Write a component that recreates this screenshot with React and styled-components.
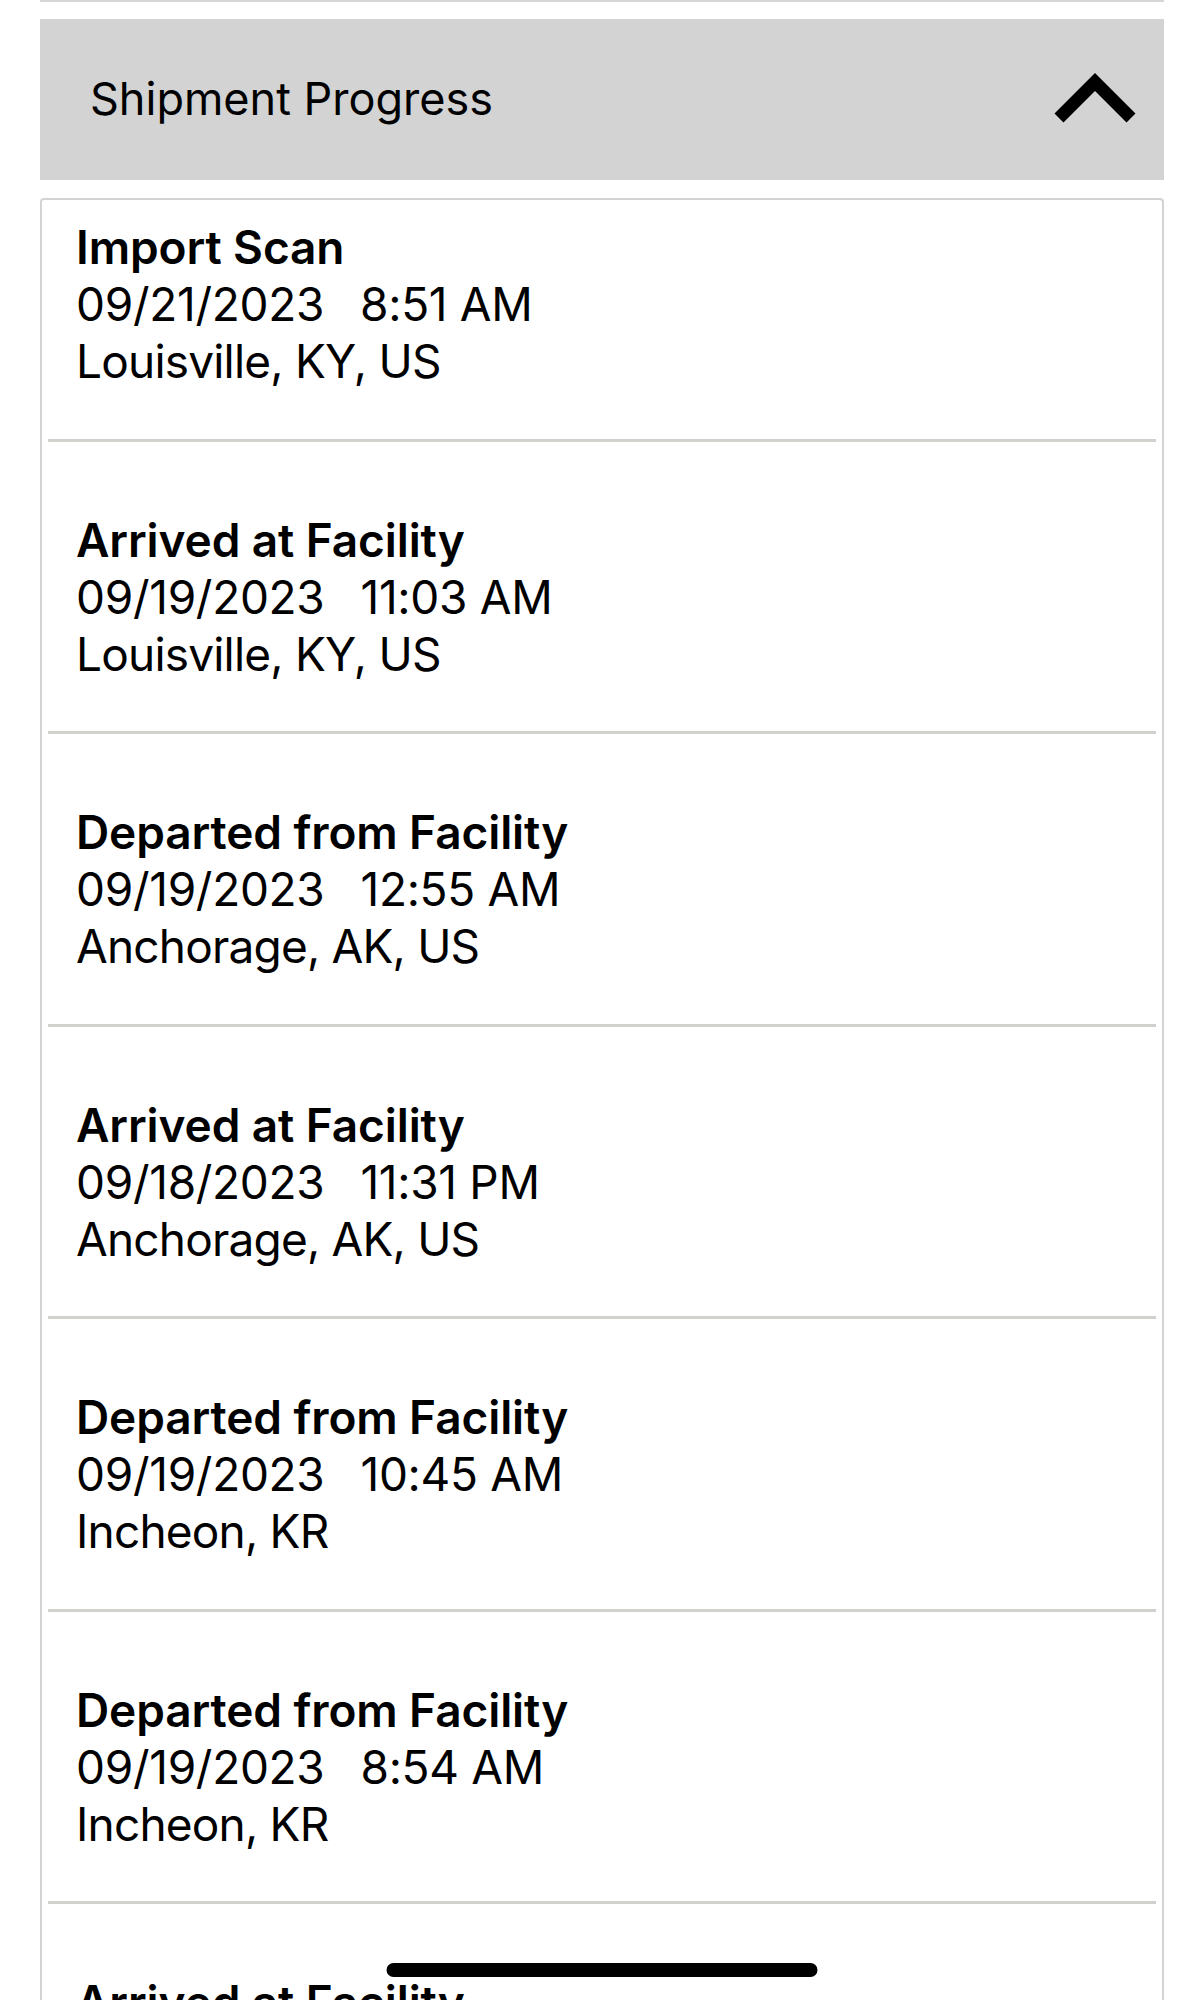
import React from "react";
import styled, { createGlobalStyle } from "styled-components";

const Global = createGlobalStyle`
  html, body { margin: 0; padding: 0; background: #ffffff; }
  body { font-family: Inter, "Noto Sans", "Liberation Sans", sans-serif; color: #000; }
`;

const Page = styled.div`
  padding: 0 40px;
  min-height: 2000px;
  box-sizing: border-box;
`;

const TopRule = styled.div`
  height: 2px;
  background: #d6d6d6;
  margin-bottom: 17px;
`;

const Header = styled.div`
  height: 161px;
  background: #d3d3d3;
  display: flex;
  align-items: center;
  justify-content: space-between;
  padding: 0 27px 2px 50px;
  box-sizing: border-box;
`;

const HeaderTitle = styled.h2`
  margin: 0;
  font-size: 45px;
  font-weight: 400;
  letter-spacing: 0;
`;

const Chevron = styled.svg`
  width: 84px;
  height: 56px;
  display: block;
  margin-top: 3px;
`;

const Card = styled.div`
  margin-top: 18px;
  border: 2px solid #d3d3d3;
  border-bottom: none;
  border-radius: 4px 4px 0 0;
  background: #fff;
`;

const Item = styled.div`
  padding: ${(p) => (p.$first ? "19px" : "70px")} 34px 48.5px;
  display: flex;
  flex-direction: column;
`;

const Divider = styled.div`
  height: 3px;
  background: #d2d1cd;
  margin: 0 6px;
`;

const spacing = { title: "-0.1px", date: "-0.3px", place: "-0.8px" };

const Line = styled.div`
  font-size: 46px;
  line-height: 57px;
  font-weight: ${(p) => (p.$kind === "title" ? 600 : 400)};
  letter-spacing: ${(p) => spacing[p.$kind]};
  white-space: nowrap;
`;

const Time = styled.span`
  margin-left: 36px;
`;

const HomeIndicator = styled.div`
  position: fixed;
  left: 50%;
  transform: translateX(-50%);
  top: 1963px;
  width: 431px;
  height: 14px;
  border-radius: 7px;
  background: #000;
`;

const events = [
  { title: "Import Scan", date: "09/21/2023", time: "8:51 AM", place: "Louisville, KY, US" },
  { title: "Arrived at Facility", date: "09/19/2023", time: "11:03 AM", place: "Louisville, KY, US" },
  { title: "Departed from Facility", date: "09/19/2023", time: "12:55 AM", place: "Anchorage, AK, US" },
  { title: "Arrived at Facility", date: "09/18/2023", time: "11:31 PM", place: "Anchorage, AK, US" },
  { title: "Departed from Facility", date: "09/19/2023", time: "10:45 AM", place: "Incheon, KR" },
  { title: "Departed from Facility", date: "09/19/2023", time: "8:54 AM", place: "Incheon, KR" },
  { title: "Arrived at Facility", date: "09/18/2023", time: "11:12 PM", place: "Incheon, KR" },
];

export default function App() {
  return (
    <>
      <Global />
      <Page>
        <TopRule />
        <Header>
          <HeaderTitle>Shipment Progress</HeaderTitle>
          <Chevron viewBox="0 0 84 56" aria-hidden="true">
            <polyline
              points="6,46 42,10 78,46"
              fill="none"
              stroke="#000"
              strokeWidth="12.7"
              strokeLinecap="butt"
              strokeLinejoin="miter"
            />
          </Chevron>
        </Header>
        <Card>
          {events.map((e, i) => (
            <React.Fragment key={i}>
              {i > 0 && <Divider />}
              <Item $first={i === 0}>
                <Line $kind="title">{e.title}</Line>
                <Line $kind="date">
                  {e.date}
                  <Time>{e.time}</Time>
                </Line>
                <Line $kind="place">{e.place}</Line>
              </Item>
            </React.Fragment>
          ))}
        </Card>
      </Page>
      <HomeIndicator />
    </>
  );
}
